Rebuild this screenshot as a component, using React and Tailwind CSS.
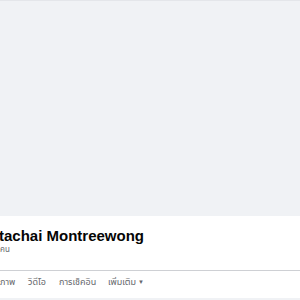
export default function App() {
  return (
    <div className="w-[300px] h-[300px] overflow-hidden bg-[#f0f2f5] flex flex-col" style={{ fontFamily: '"Liberation Sans", "Noto Sans", "Noto Sans Thai", sans-serif' }}>
      <div className="h-[216px] shrink-0 bg-[#f0f2f5] border-t border-[#e4e6ea]" />
      <div className="bg-white flex flex-col">
        <div className="h-[54px] flex flex-col pt-[10px]">
          <div className="text-[15px] leading-[20px] font-bold text-[#050505] whitespace-nowrap -ml-[1px]">tachai Montreewong</div>
          <div className="text-[8px] leading-[8px] text-[#65676b]">คน</div>
        </div>
        <div className="h-px bg-[#ced0d4]" />
        <div className="h-[27px] flex items-center pb-[4px] text-[9px] text-[#65676b] whitespace-nowrap">
          <span className="w-[28px]">ภาพ</span>
          <span className="w-[31px]">วิดีโอ</span>
          <span className="w-[49px]">การเช็คอิน</span>
          <span className="flex items-center gap-[2px]">เพิ่มเติม<span className="text-[6px]">▼</span></span>
        </div>
      </div>
    </div>
  );
}
